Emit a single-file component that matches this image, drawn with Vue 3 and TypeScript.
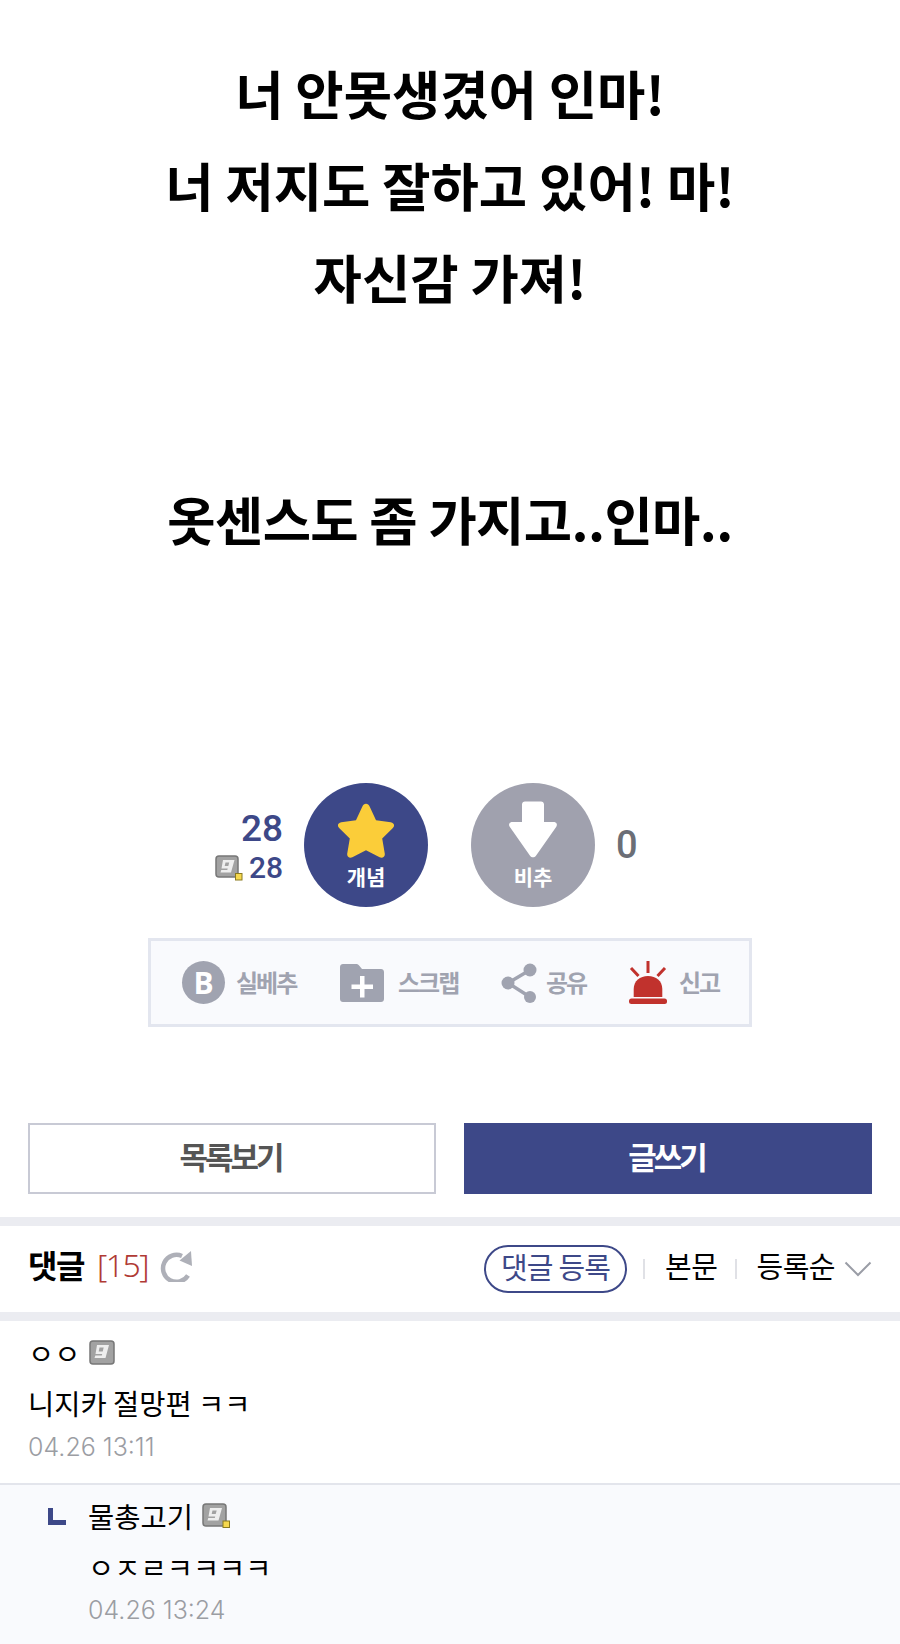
<script setup lang="ts">
const titleLines: string[] = ['너 안못생겼어 인마!', '너 저지도 잘하고 있어! 마!', '자신감 가져!']
</script>

<template>
  <div class="page">
    <section class="article">
      <p v-for="line in titleLines" :key="line" class="headline">{{ line }}</p>
      <p class="headline second">옷센스도 좀 가지고..인마..</p>
    </section>

    <section class="votes">
      <div class="counts">
        <div class="count-big">28</div>
        <div class="count-small">
          <svg class="gonicon" viewBox="0 0 28 26" width="28" height="26">
            <rect x="1" y="1" width="22" height="21" rx="3" fill="#a2a2a2" stroke="#777" stroke-width="1.500" />
            <path fill-rule="evenodd" d="M8 5h11.500L16 17.500H5.500l.8-2.500h6l.4-1.500H6.500zM10.500 7.500l-.8 3.500h3.600l.9-3.500z" fill="#eee" />
            <rect x="20.500" y="18.500" width="6.500" height="6.500" fill="#f6d84e" stroke="#8a7a20" stroke-width="1" />
          </svg>
          <span>28</span>
        </div>
      </div>
      <div class="vote up">
        <svg class="star" viewBox="2.800 3.500 54.400 51" width="58" height="56">
          <path d="M30 3.500c1.600 0 2.600 1 3.400 2.600l6 12.700 13.800 2c3 .4 4.200 3.300 2 5.400L45.200 36l2.400 14c.5 3-2.200 5-4.800 3.600L30 47l-12.800 6.600c-2.600 1.400-5.300-.6-4.800-3.600l2.400-14L4.800 26.200c-2.200-2.100-1-5 2-5.400l13.800-2 6-12.700C27.400 4.500 28.400 3.500 30 3.500z" fill="#fbcd39" />
        </svg>
        <span class="vote-label">개념</span>
      </div>
      <div class="vote down">
        <svg class="arrow" viewBox="0 0 50 58" width="50" height="58">
          <path d="M14 3.500c0-1.900 1.300-3 3-3h16c1.700 0 3 1.100 3 3V21h9.500c3 0 4.300 2.300 2.800 4.800L27.800 55c-1.200 1.800-4.400 1.800-5.600 0L1.700 25.800C.2 23.300 1.500 21 4.500 21H14z" fill="#fff" />
        </svg>
        <span class="vote-label">비추</span>
      </div>
      <div class="count-zero">0</div>
    </section>

    <section class="tools">
      <div class="tool t1">
        <span class="b-icon">B</span>
        <span class="tool-text">실베추</span>
      </div>
      <div class="tool t2">
        <svg viewBox="0 0 44 38" width="44" height="38">
          <path d="M3 0h13c1.500 0 2.500.6 3.300 1.800L22 5h19c1.700 0 3 1.300 3 3v27c0 1.700-1.300 3-3 3H3c-1.700 0-3-1.300-3-3V3c0-1.700 1.300-3 3-3z" fill="#a0a3b0" />
          <path d="M20 12h4.500v8.500H33V25h-8.500v8.500H20V25h-8.500v-4.500H20z" fill="#fff" />
        </svg>
        <span class="tool-text">스크랩</span>
      </div>
      <div class="tool t3">
        <svg viewBox="0 0 36 40" width="36" height="40">
          <path d="M29 7 7 20l22 14" fill="none" stroke="#a0a3b0" stroke-width="3.500" />
          <circle cx="29" cy="7" r="6.500" fill="#a0a3b0" />
          <circle cx="7" cy="20" r="6.500" fill="#a0a3b0" />
          <circle cx="29" cy="34" r="6" fill="#a0a3b0" />
        </svg>
        <span class="tool-text">공유</span>
      </div>
      <div class="tool t4">
        <svg viewBox="0 0 38 43" width="38" height="43">
          <path d="M4.700 36V28C4.700 20 11 15 19 15s14.300 5 14.300 13v8z" fill="#c1322d" />
          <rect x="0" y="37.500" width="38" height="5.500" rx="2.500" fill="#c1322d" />
          <path d="M19 0v12M2 7l7.500 8M36 7l-7.500 8" stroke="#c1322d" stroke-width="3" fill="none" />
        </svg>
        <span class="tool-text">신고</span>
      </div>
    </section>

    <section class="actions">
      <div class="btn list">목록보기</div>
      <div class="btn write">글쓰기</div>
    </section>

    <div class="band band-top"></div>
    <section class="comment-head">
      <div class="head-left">
        <span class="head-title">댓글</span>
        <span class="head-count">[15]</span>
        <svg class="refresh" viewBox="0 0 33 32" width="33" height="32">
          <path d="M28 25.500A13.500 13.500 0 1 1 22 6" fill="none" stroke="#aeb0b8" stroke-width="4.500" />
          <path d="M31 1 32 16 19.500 10.500z" fill="#aeb0b8" />
        </svg>
      </div>
      <div class="head-right">
        <span class="pill">댓글 등록</span>
        <span class="sep first-sep"></span>
        <span class="link">본문</span>
        <span class="sep"></span>
        <span class="link">등록순</span>
        <svg class="chev" viewBox="0 0 28 16" width="28" height="16">
          <path d="M1.500 1.500 14 14 26.500 1.500" fill="none" stroke="#9a9da6" stroke-width="2" />
        </svg>
      </div>
    </section>
    <div class="band"></div>

    <section class="comment">
      <div class="c-name">
        <span>ㅇㅇ</span>
        <svg class="gonicon" viewBox="0 0 26 26" width="26" height="26">
          <rect x="1" y="1" width="24" height="23" rx="3" fill="#a2a2a2" stroke="#777" stroke-width="1.500" />
          <path fill-rule="evenodd" d="M8 5h12L16.500 18H5.500l.8-2.500h6.500l.4-1.500H6.500zM10.500 7.500l-.8 4h4l1-4z" fill="#eee" />
        </svg>
      </div>
      <div class="c-text">니지카 절망편 ㅋㅋ</div>
      <div class="c-date">04.26 13:11</div>
    </section>

    <section class="reply">
      <svg class="reply-mark" viewBox="0 0 18 17" width="18" height="17">
        <path d="M2.500 0v14.500H18" fill="none" stroke="#3d4888" stroke-width="5" />
      </svg>
      <div>
        <div class="c-name">
          <span>물총고기</span>
          <svg class="gonicon" viewBox="0 0 29 26" width="29" height="26">
            <rect x="1" y="1" width="23" height="22" rx="3" fill="#a2a2a2" stroke="#777" stroke-width="1.500" />
            <path fill-rule="evenodd" d="M8 5h12L16.500 17.500H5.500l.8-2.500h6.500l.4-1.500H6.500zM10.500 7.500l-.8 3.500h4l1-3.500z" fill="#eee" />
            <rect x="21" y="18" width="6.500" height="6.500" fill="#f6d84e" stroke="#8a7a20" stroke-width="1" />
          </svg>
        </div>
        <div class="c-text reply-text">ㅇㅈㄹㅋㅋㅋㅋ</div>
        <div class="c-date reply-date">04.26 13:24</div>
      </div>
    </section>
  </div>
</template>

<style>
html, body { margin: 0; background: #fff; }
</style>

<style scoped>
.page {
  width: 900px;
  height: 1644px;
  overflow: hidden;
  background: #fff;
  font-family: "Noto Sans CJK KR", "Noto Sans", sans-serif;
  color: #000;
}
p { margin: 0; }
.article { padding-top: 46px; height: 783px; box-sizing: border-box; }
.headline {
  text-align: center;
  font-size: 52.500px;
  font-weight: 700;
  line-height: 92px;
}
.second { margin-top: 150px; letter-spacing: -.6px; }
.votes { display: flex; align-items: center; height: 124px; padding-left: 216px; }
.counts { width: 67px; margin-right: 21px; color: #3d4888; font-family: "Roboto", sans-serif; text-align: right; font-weight: 500; padding-top: 4px; }
.count-big { font-size: 37px; line-height: 41px; }
.count-small { display: flex; justify-content: flex-end; align-items: center; gap: 6px; font-size: 30px; line-height: 38px; margin-left: -8px; }
.vote {
  width: 124px; height: 124px; border-radius: 50%;
  display: flex; flex-direction: column; align-items: center;
  color: #fff; position: relative;
}
.up { background: #3d4888; margin-right: 43px; }
.down { background: #a0a1ae; }
.star { margin-top: 20px; }
.arrow { margin-top: 18px; }
.vote-label { font-size: 21px; font-weight: 700; line-height: 28px; position: absolute; bottom: 17px; }
.count-zero { margin-left: 21px; font-family: "Roboto", sans-serif; font-size: 38px; font-weight: 500; color: #6b6e76; }
.tools {
  margin: 31px 0 0 148px;
  width: 604px; height: 89px; box-sizing: border-box;
  border: 3px solid #e3e6ef; background: #f9fafd;
  display: flex; align-items: center;
  padding-left: 31px;
}
.tool { display: flex; align-items: center; }
.tool-text { font-size: 24px; font-weight: 700; color: #a0a3b0; letter-spacing: -2px; padding-bottom: 3px; }
.t1 { gap: 11px; width: 158px; }
.t2 { gap: 14px; width: 161px; }
.t3 { gap: 9px; width: 128px; }
.t4 { gap: 12px; }
.b-icon {
  width: 43px; height: 43px; border-radius: 50%; background: #a0a3b0; color: #fff;
  font: 700 30px/43px "Open Sans", sans-serif; text-align: center;
}
.actions { margin: 96px 28px 0; display: grid; grid-template-columns: 408px 408px; gap: 28px; }
.btn {
  height: 71px; box-sizing: border-box; padding: 0 3px 6px 0;
  display: flex; align-items: center; justify-content: center;
  font-size: 31px; font-weight: 700; letter-spacing: -3px;
}
.list { border: 2px solid #c8cad5; color: #555; }
.write { background: #3d4888; color: #fff; }
.band { height: 9px; background: #ebecf1; }
.band-top { margin-top: 23px; }
.comment-head {
  height: 86px; display: flex; align-items: center; justify-content: space-between;
  padding: 0 28px;
}
.head-left { display: flex; align-items: center; }
.head-title { font-size: 32px; font-weight: 700; letter-spacing: -1.500px; padding-bottom: 10px; }
.head-count { font-size: 32px; color: #b03a34; font-family: "Noto Sans", sans-serif; font-weight: 300; letter-spacing: -1.500px; margin-left: 13px; padding-bottom: 9px; }
.refresh { margin: 0 0 6px 12px; }
.head-right { display: flex; align-items: center; }
.pill {
  border: 2px solid #3d4888; border-radius: 24px; height: 48px; box-sizing: border-box; width: 143px; padding-bottom: 6px;
  display: flex; align-items: center; justify-content: center;
  font-size: 29px; font-weight: 400; color: #3d4888; letter-spacing: -.8px;
}
.sep { width: 2px; height: 20px; background: #e0e1e6; margin: 0 19px 0 18px; }
.first-sep { margin: 0 20px 0 16px; }
.link { font-size: 29px; letter-spacing: -.5px; padding-bottom: 8px; }
.chev { margin-left: 9px; }
.comment { padding: 13px 28px 0; height: 164px; box-sizing: border-box; border-bottom: 2px solid #e3e5ec; }
.c-name { display: flex; align-items: center; gap: 9px; font-size: 28.500px; line-height: 38px; }
.c-text { font-size: 28.500px; line-height: 38px; margin-top: 12px; }
.c-date { font-size: 25px; line-height: 36px; margin-top: 7px; color: #9b9da3; font-family: "Inter", sans-serif; font-weight: 300; }
.reply { background: #f9fafd; height: 159px; padding: 12px 0 0 48px; display: flex; gap: 22px; }
.reply-mark { margin-top: 11px; }
.reply-text { margin-top: 13px; }
.reply-date { margin-top: 6px; }
</style>
